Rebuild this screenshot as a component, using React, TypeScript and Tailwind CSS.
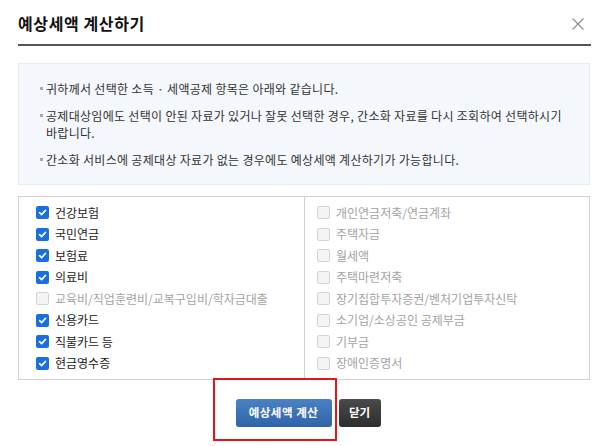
const font = "font-['Malgun_Gothic','Noto_Sans_CJK_KR',sans-serif]"

const notices = [
  ['귀하께서 선택한 소득 · 세액공제 항목은 아래와 같습니다.'],
  ['공제대상임에도 선택이 안된 자료가 있거나 잘못 선택한 경우, 간소화 자료를 다시 조회하여 선택하시기', '바랍니다.'],
  ['간소화 서비스에 공제대상 자료가 없는 경우에도 예상세액 계산하기가 가능합니다.'],
]

const leftItems = [
  { label: '건강보험', checked: true },
  { label: '국민연금', checked: true },
  { label: '보험료', checked: true },
  { label: '의료비', checked: true },
  { label: '교육비/직업훈련비/교복구입비/학자금대출', checked: false },
  { label: '신용카드', checked: true },
  { label: '직불카드 등', checked: true },
  { label: '현금영수증', checked: true },
]

const rightItems = [
  '개인연금저축/연금계좌',
  '주택자금',
  '월세액',
  '주택마련저축',
  '장기집합투자증권/벤처기업투자신탁',
  '소기업/소상공인 공제부금',
  '기부금',
  '장애인증명서',
]

function Box({ checked }: { checked: boolean }) {
  if (!checked) {
    return <span className="h-[13px] w-[13px] shrink-0 rounded-[2px] border border-[#d4d4d4] bg-[#f4f4f4]" />
  }
  return (
    <span className="flex h-[13px] w-[13px] shrink-0 items-center justify-center rounded-[2px] bg-[#1a6fe0]">
      <svg width="9" height="9" viewBox="0 0 10 10">
        <path d="M1.8 5.2 L4 7.4 L8.3 2.6" fill="none" stroke="white" strokeWidth="1.8" strokeLinecap="round" strokeLinejoin="round" />
      </svg>
    </span>
  )
}

function Row({ label, checked }: { label: string; checked: boolean }) {
  return (
    <label className="flex h-[21.5px] items-center gap-[6px]">
      <Box checked={checked} />
      <span className={checked ? 'text-[#1a1a1a]' : 'text-[#a3a3a3]'}>{label}</span>
    </label>
  )
}

export default function App() {
  return (
    <div className={`h-[446px] w-[600px] overflow-hidden bg-white ${font}`}>
      <div className="ml-[18px] w-[573px]">
        <header className="flex items-center justify-between border-b-2 border-[#555] pb-[11px] pt-[13px]">
          <h1 className="text-[16px] font-bold leading-[20px] tracking-[0.6px] text-[#111]">예상세액 계산하기</h1>
          <svg width="12" height="12" viewBox="0 0 12 12" className="mr-[7px] mt-[2px]">
            <path d="M0.5 0.5 L11.5 11.5 M11.5 0.5 L0.5 11.5" stroke="#8a8a8a" strokeWidth="1.1" />
          </svg>
        </header>

        <section className="mt-[17px] w-[572px] border border-[#e6ebf2] bg-[#f4f7fc] py-[16px] pl-[21px] pr-[8px]">
          <ul className="space-y-[10px] text-[12px] leading-[17px] tracking-[0.3px] text-[#333]">
            {notices.map(lines => (
              <li key={lines[0]} className="flex">
                <span className="flex h-[17px] w-[6px] shrink-0 items-center">
                  <span className="h-[3px] w-[3px] bg-[#a8a8a8]" />
                </span>
                <p>
                  {lines.map((line, i) => (
                    <span key={line}>
                      {i > 0 && <br />}
                      {line}
                    </span>
                  ))}
                </p>
              </li>
            ))}
          </ul>
        </section>

        <section className="mt-[11px] grid w-[572px] grid-cols-[286px_1fr] border border-[#d0d0d0] text-[12px]">
          <div className="border-r border-[#d0d0d0] pb-[5px] pl-[17px] pt-[5px]">
            {leftItems.map(item => (
              <Row key={item.label} label={item.label} checked={item.checked} />
            ))}
          </div>
          <div className="pb-[5px] pl-[12px] pt-[5px]">
            {rightItems.map(label => (
              <Row key={label} label={label} checked={false} />
            ))}
          </div>
        </section>

        <div className="relative mt-[19px] flex w-[572px] justify-center gap-[7px] pl-[8px]">
          <button
            type="button"
            className="h-[28px] w-[96px] rounded-[3px] bg-gradient-to-b from-[#4b82c4] to-[#2f64a8] text-[11.5px] font-bold tracking-[0.5px] text-white"
          >
            예상세액 계산
          </button>
          <button
            type="button"
            className="h-[28px] w-[42px] rounded-[3px] bg-gradient-to-b from-[#4a4a4a] to-[#2e2e2e] text-[11.5px] font-bold text-white"
          >
            닫기
          </button>
          <div className="pointer-events-none absolute left-[195px] top-[-21px] h-[63px] w-[124px] border-2 border-[#e4141b]" />
        </div>
      </div>
    </div>
  )
}
